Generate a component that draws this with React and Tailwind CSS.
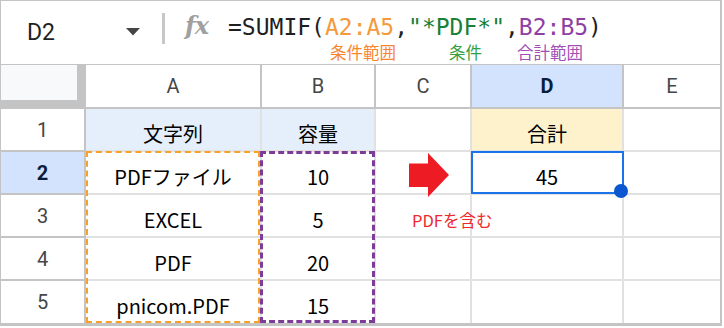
import React from "react";

const COLS = ["col-start-1", "col-start-2", "col-start-3", "col-start-4", "col-start-5", "col-start-6"];
const ROWS = ["row-start-1", "row-start-2", "row-start-3", "row-start-4", "row-start-5", "row-start-6"];

const HEAD_FONT = { fontFamily: "Roboto, 'Liberation Sans', sans-serif" };
const BODY_FONT = { fontFamily: "'Noto Sans CJK JP', 'Noto Sans', sans-serif" };
const MONO_FONT = { fontFamily: "'DejaVu Sans Mono', 'Liberation Mono', monospace" };

function borderFor(c, r) {
  if (r === 0) {
    if (c === 5) return "border-b-2 border-[#c4c4c4]";
    return "border-r-2 border-b-2 border-[#c4c4c4]";
  }
  if (c === 0) return r < 5 ? "border-r-2 border-b-2 border-[#c4c4c4]" : "border-r-2 border-[#c4c4c4]";
  if (c === 5) return r < 5 ? "border-b-2 border-[#e1e1e1]" : "";
  return r < 5 ? "border-r-2 border-b-2 border-[#e1e1e1]" : "border-r-2 border-[#e1e1e1]";
}

function Cell({ c, r, className = "", style, children }) {
  return (
    <div className={`${COLS[c]} ${ROWS[r]} ${borderFor(c, r)} ${className}`} style={style}>
      {children}
    </div>
  );
}

const body = [
  ["文字列", "容量", "", "合計", ""],
  ["PDFファイル", "10", "", "45", ""],
  ["EXCEL", "5", "", "", ""],
  ["PDF", "20", "", "", ""],
  ["pnicom.PDF", "15", "", "", ""],
];

const bodyBg = {
  "1-1": "bg-[#e4effb]",
  "1-2": "bg-[#e4effb]",
  "1-4": "bg-[#fef2cd]",
};

export default function App() {
  const letters = ["A", "B", "C", "D", "E"];
  return (
    <div className="w-[724px] h-[328px] bg-white">
      <div className="w-[722px] h-[326px] border-l border-t border-r-2 border-b-[3px] border-[#c4c4c4] flex flex-col">
        {/* Formula bar */}
        <div className="flex h-[64px] border-b border-[#c4c4c4] shrink-0">
          <div className="w-[161px] flex items-center justify-between pl-[26px] pr-[22px] pb-[1px]">
            <span className="text-[23px] text-[#1f1f1f] leading-none" style={HEAD_FONT}>D2</span>
            <svg width="14" height="8" viewBox="0 0 14 8">
              <polygon points="0,0 14,0 7,7.5" fill="#444746" />
            </svg>
          </div>
          <div className="w-[3px] h-[31px] mt-[12px] bg-[#c7c7c7]" />
          <div className="w-[63px] flex items-start pl-[20px] pt-[13px]">
            <span
              className="text-[24px] italic font-bold text-[#a0a0a0] leading-none tracking-[-0.5px]"
              style={{ fontFamily: "'DejaVu Serif', 'Liberation Serif', serif" }}
            >
              fx
            </span>
          </div>
          <div className="flex flex-col pt-[11px]">
            <div className="text-[23px] leading-[30px] whitespace-pre text-[#1f1f1f]" style={MONO_FONT}>
              <span>=SUMIF(</span>
              <span className="text-[#f39a3c]">A2:A5</span>
              <span>,</span>
              <span className="text-[#188038]">"*PDF*"</span>
              <span>,</span>
              <span className="text-[#8e3fa3]">B2:B5</span>
              <span>)</span>
            </div>
            <div className="flex text-[16.5px] leading-[20px] whitespace-nowrap" style={BODY_FONT}>
              <span className="ml-[102px] w-[119px] text-[#f7862f]">条件範囲</span>
              <span className="w-[68px] text-[#34a043]">条件</span>
              <span className="text-[#a24fb6]">合計範囲</span>
            </div>
          </div>
        </div>

        {/* Grid */}
        <div className="grid grid-cols-[85px_176px_114px_96px_152px_96px] grid-rows-[44px_43px_43px_43px_43px_42px]">
          {/* corner */}
          <div className="col-start-1 row-start-1 bg-[#c4c4c4]">
            <div className="w-[76px] h-[35px] bg-[#f8f9fa]" />
          </div>
          {letters.map((l, i) => (
            <Cell
              key={l}
              c={i + 1}
              r={0}
              className={`flex items-center justify-center text-[20px] ${
                l === "D" ? "bg-[#d3e3fd] font-bold text-[#0b1d3a]" : "bg-white text-[#444746]"
              }`}
              style={HEAD_FONT}
            >
              {l}
            </Cell>
          ))}
          {[1, 2, 3, 4, 5].map((r) => (
            <Cell
              key={`rh${r}`}
              c={0}
              r={r}
              className={`flex items-center justify-center text-[20px] ${
                r === 2 ? "bg-[#d3e3fd] font-bold text-[#0b1d3a]" : "bg-white text-[#444746]"
              }`}
              style={HEAD_FONT}
            >
              {r}
            </Cell>
          ))}
          {body.map((row, ri) =>
            row.map((txt, ci) => {
              const r = ri + 1;
              const c = ci + 1;
              const bg = bodyBg[`${r}-${c}`] || "";
              if (c === 3 && r === 2) {
                return (
                  <Cell key={`${r}-${c}`} c={c} r={r} className="relative">
                    <svg
                      className="absolute left-[33px] top-[1px] z-10"
                      width="41"
                      height="45"
                      viewBox="0 0 41 45"
                    >
                      <polygon points="0,10.5 19,10.5 19,0 40,22 19,44 19,34 0,34" fill="#ed1c24" />
                    </svg>
                  </Cell>
                );
              }
              if (c === 3 && r === 3) {
                return (
                  <Cell key={`${r}-${c}`} c={c} r={r} className="flex items-center pl-[36px] pt-[10px]">
                    <span
                      className="relative z-10 whitespace-nowrap text-[16.5px] text-[#ee2a2f] leading-none"
                      style={BODY_FONT}
                    >
                      PDFを含む
                    </span>
                  </Cell>
                );
              }
              return (
                <Cell
                  key={`${r}-${c}`}
                  c={c}
                  r={r}
                  className={`flex items-center justify-center pt-[8px] text-[20px] text-black leading-none ${bg}`}
                  style={BODY_FONT}
                >
                  {txt}
                </Cell>
              );
            })
          )}
          {/* range overlays */}
          <div className="col-start-2 row-start-3 row-span-4 -mt-px mr-[2px] border-2 border-dashed border-[#f5a12c] pointer-events-none relative z-10" />
          <div className="col-start-3 row-start-3 row-span-4 -mt-px -ml-[2px] mr-[1px] border-[3px] border-dashed border-[#7d3c98] pointer-events-none relative z-10" />
          <div className="col-start-5 row-start-3 -mt-px -ml-px mb-[1px] border-2 border-[#1a73e8] pointer-events-none relative z-20">
            <div className="absolute -right-[6px] -bottom-[6px] w-[14px] h-[14px] rounded-full bg-[#0b57d0]" />
          </div>
        </div>
      </div>
    </div>
  );
}
